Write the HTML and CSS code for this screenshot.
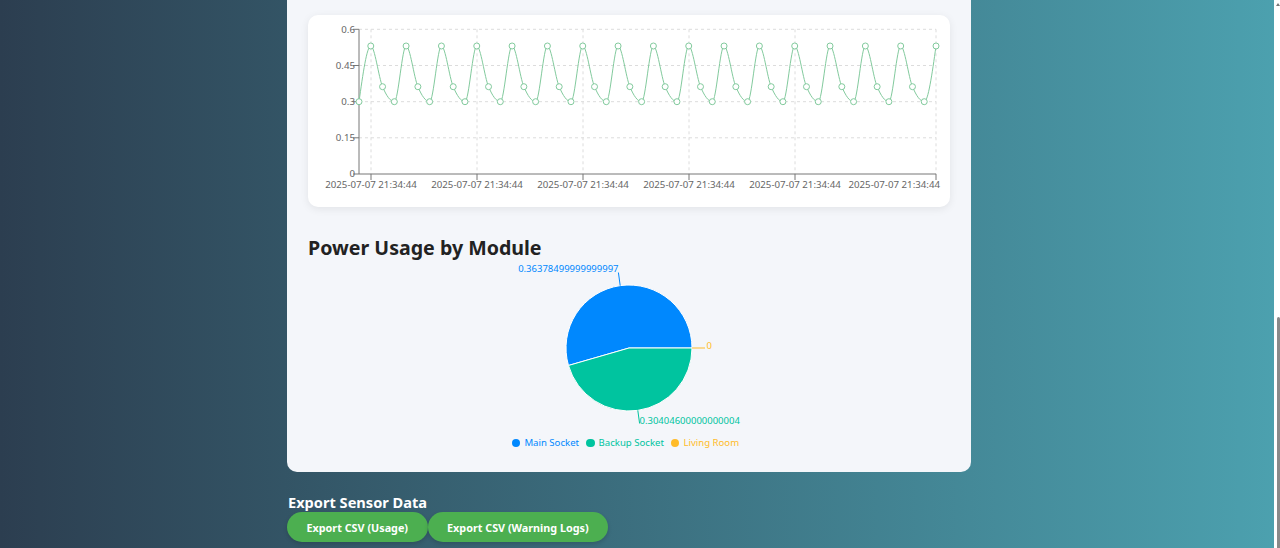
FILE: index.html
```html
<!DOCTYPE html>
<html lang="en">
<head>
<meta charset="utf-8">
<title>Power Usage</title>
<link rel="stylesheet" href="styles.css">
</head>
<body>
<div class="scrollbar"><span class="scroll-arrow"></span><div class="scroll-thumb"></div></div>
<main class="page">
  <section class="panel">
    <div class="card">
      <svg class="line-chart" width="642" height="192" viewBox="308 15 642 192">
        <defs>
          <marker id="dot" markerWidth="8" markerHeight="8" refX="4" refY="4" markerUnits="userSpaceOnUse">
            <circle cx="4" cy="4" r="3" fill="#fff" stroke="#82ca9d" stroke-width="1"/>
          </marker>
        </defs>
        <g class="grid">
          <line x1="359" y1="29.3" x2="936" y2="29.3"/>
          <line x1="359" y1="65.5" x2="936" y2="65.5"/>
          <line x1="359" y1="101.7" x2="936" y2="101.7"/>
          <line x1="359" y1="137.8" x2="936" y2="137.8"/>
          <line x1="371" y1="29.3" x2="371" y2="174"/>
          <line x1="477" y1="29.3" x2="477" y2="174"/>
          <line x1="583" y1="29.3" x2="583" y2="174"/>
          <line x1="689" y1="29.3" x2="689" y2="174"/>
          <line x1="795" y1="29.3" x2="795" y2="174"/>
          <line x1="936" y1="29.3" x2="936" y2="174"/>
        </g>
        <g class="axis">
          <line x1="359" y1="29.3" x2="359" y2="174"/>
          <line x1="359" y1="174" x2="936" y2="174"/>
          <line x1="353" y1="29.3" x2="359" y2="29.3"/>
          <line x1="353" y1="65.5" x2="359" y2="65.5"/>
          <line x1="353" y1="101.7" x2="359" y2="101.7"/>
          <line x1="353" y1="137.8" x2="359" y2="137.8"/>
          <line x1="353" y1="174" x2="359" y2="174"/>
          <line x1="371" y1="174" x2="371" y2="180"/>
          <line x1="477" y1="174" x2="477" y2="180"/>
          <line x1="583" y1="174" x2="583" y2="180"/>
          <line x1="689" y1="174" x2="689" y2="180"/>
          <line x1="795" y1="174" x2="795" y2="180"/>
          <line x1="936" y1="174" x2="936" y2="180"/>
        </g>
        <g class="tick-text y-ticks">
          <text x="355" y="32.6">0.6</text>
          <text x="355" y="68.8">0.45</text>
          <text x="355" y="105">0.3</text>
          <text x="355" y="141.1">0.15</text>
          <text x="355" y="176.8">0</text>
        </g>
        <g class="tick-text x-ticks">
          <text x="371" y="187.5">2025-07-07 21:34:44</text>
          <text x="477" y="187.5">2025-07-07 21:34:44</text>
          <text x="583" y="187.5">2025-07-07 21:34:44</text>
          <text x="689" y="187.5">2025-07-07 21:34:44</text>
          <text x="795" y="187.5">2025-07-07 21:34:44</text>
          <text x="940" y="187.5" class="end">2025-07-07 21:34:44</text>
        </g>
        <path class="series" d="M359,101.7 c3.925,-27.85 7.851,-55.7 11.776,-55.7
          c3.925,0 7.851,31.42 11.776,40.7 c3.925,9.28 7.851,15 11.776,15 c3.925,0 7.851,-55.7 11.776,-55.7
          c3.925,0 7.851,31.42 11.776,40.7 c3.925,9.28 7.851,15 11.776,15 c3.925,0 7.851,-55.7 11.776,-55.7
          c3.925,0 7.851,31.42 11.776,40.7 c3.925,9.28 7.851,15 11.776,15 c3.925,0 7.851,-55.7 11.776,-55.7
          c3.925,0 7.851,31.42 11.776,40.7 c3.925,9.28 7.851,15 11.776,15 c3.925,0 7.851,-55.7 11.776,-55.7
          c3.925,0 7.851,31.42 11.776,40.7 c3.925,9.28 7.851,15 11.776,15 c3.925,0 7.851,-55.7 11.776,-55.7
          c3.925,0 7.851,31.42 11.776,40.7 c3.925,9.28 7.851,15 11.776,15 c3.925,0 7.851,-55.7 11.776,-55.7
          c3.925,0 7.851,31.42 11.776,40.7 c3.925,9.28 7.851,15 11.776,15 c3.925,0 7.851,-55.7 11.776,-55.7
          c3.925,0 7.851,31.42 11.776,40.7 c3.925,9.28 7.851,15 11.776,15 c3.925,0 7.851,-55.7 11.776,-55.7
          c3.925,0 7.851,31.42 11.776,40.7 c3.925,9.28 7.851,15 11.776,15 c3.925,0 7.851,-55.7 11.776,-55.7
          c3.925,0 7.851,31.42 11.776,40.7 c3.925,9.28 7.851,15 11.776,15 c3.925,0 7.851,-55.7 11.776,-55.7
          c3.925,0 7.851,31.42 11.776,40.7 c3.925,9.28 7.851,15 11.776,15 c3.925,0 7.851,-55.7 11.776,-55.7
          c3.925,0 7.851,31.42 11.776,40.7 c3.925,9.28 7.851,15 11.776,15 c3.925,0 7.851,-55.7 11.776,-55.7
          c3.925,0 7.851,31.42 11.776,40.7 c3.925,9.28 7.851,15 11.776,15 c3.925,0 7.851,-55.7 11.776,-55.7
          c3.925,0 7.851,31.42 11.776,40.7 c3.925,9.28 7.851,15 11.776,15 c3.925,0 7.851,-55.7 11.776,-55.7
          c3.925,0 7.851,31.42 11.776,40.7 c3.925,9.28 7.851,15 11.776,15 c3.925,0 7.851,-55.7 11.776,-55.7
          c3.925,0 7.851,31.42 11.776,40.7 c3.925,9.28 7.851,15 11.776,15 c3.925,0 7.851,-27.85 11.776,-55.7"/>
      </svg>
    </div>

    <h2 class="section-title">Power Usage by Module</h2>

    <svg class="pie-chart" width="642" height="170" viewBox="308 262 642 170">
      <path class="slice" fill="#0088FE" d="M629,348 L692,348 A63,63 0 1 0 568.47,365.47 Z"/>
      <path class="slice" fill="#00C49F" d="M629,348 L568.47,365.47 A63,63 0 0 0 692,348 Z"/>
      <line class="label-line" stroke="#0088FE" x1="620.2" y1="285.6" x2="618.4" y2="272.5"/>
      <line class="label-line" stroke="#00C49F" x1="637.8" y1="410.4" x2="639.6" y2="423.5"/>
      <line class="label-line" stroke="#FFBB28" x1="692" y1="348" x2="705" y2="348"/>
      <text class="pie-label" fill="#0088FE" x="618.5" y="271.8" text-anchor="end">0.36378499999999997</text>
      <text class="pie-label" fill="#00C49F" x="639.5" y="424.4">0.30404600000000004</text>
      <text class="pie-label" fill="#FFBB28" x="706.5" y="348.5">0</text>
    </svg>

    <ul class="legend">
      <li class="legend-item main"><span class="legend-dot"></span>Main Socket</li>
      <li class="legend-item backup"><span class="legend-dot"></span>Backup Socket</li>
      <li class="legend-item living"><span class="legend-dot"></span>Living Room</li>
    </ul>
  </section>

  <section class="export">
    <h3 class="export-title">Export Sensor Data</h3>
    <div class="actions">
      <button class="btn">Export CSV (Usage)</button>
      <button class="btn">Export CSV (Warning Logs)</button>
    </div>
  </section>
</main>
</body>
</html>
```

FILE: styles.css
```css
html {
  background: linear-gradient(to right, #2c3e50, #4ca1af);
  min-height: 100%;
}

body {
  margin: 0;
  padding-right: 6px;
  font-family: "Noto Sans", "Open Sans", sans-serif;
  color: #222;
  overflow: hidden;
  height: 548px;
}

.page {
  width: 700px;
  margin: 0 auto;
}

.panel {
  box-sizing: border-box;
  width: 684px;
  margin-top: -20px;
  padding: 35px 21px 19px;
  background: #f4f6fa;
  border-radius: 10px;
}

.card {
  background: #fff;
  border-radius: 10px;
  box-shadow: 0 2px 8px rgba(0, 0, 0, 0.08);
}

.line-chart,
.pie-chart {
  display: block;
}

.grid line {
  stroke: #dcdcdc;
  stroke-dasharray: 3 3;
  stroke-width: 1;
}

.axis line {
  stroke: #777;
  stroke-width: 1;
}

.tick-text text {
  font-family: "Noto Sans", sans-serif;
  font-size: 9.7px;
  fill: #666;
}

.y-ticks text {
  text-anchor: end;
}

.x-ticks text {
  text-anchor: middle;
}

.x-ticks text.end {
  text-anchor: end;
}

.series {
  fill: none;
  stroke: #82ca9d;
  stroke-width: 1;
  marker-start: url(#dot);
  marker-mid: url(#dot);
  marker-end: url(#dot);
}

.section-title {
  margin: 27px 0 0;
  font-size: 19.6px;
  line-height: 28px;
  font-weight: 700;
  color: #222;
}

.slice {
  stroke: #fff;
  stroke-width: 1;
}

.label-line {
  stroke-width: 1;
}

.pie-label {
  font-family: "Noto Sans", sans-serif;
  font-size: 9.5px;
}

.legend {
  display: flex;
  justify-content: center;
  margin: 0;
  padding: 1px 0 0;
  list-style: none;
  height: 20px;
  font-size: 9.6px;
  line-height: 20px;
}

.legend-item {
  display: flex;
  align-items: center;
  margin-right: 7px;
}

.legend-dot {
  width: 8.5px;
  height: 8.5px;
  border-radius: 50%;
  margin-right: 4px;
  background: currentColor;
}

.legend-item.main { color: #0088FE; }
.legend-item.backup { color: #00C49F; }
.legend-item.living { color: #FFBB28; }

.export {
  padding-top: 20px;
}

.export-title {
  margin: 0;
  padding-left: 1px;
  font-size: 14.6px;
  line-height: 20px;
  font-weight: 700;
  color: #fff;
}

.actions {
  display: flex;
  gap: 0;
}

.btn {
  height: 30px;
  padding: 0 19.5px;
  border: none;
  border-radius: 15px;
  background: #4caf50;
  color: #fff;
  font-family: "Noto Sans", sans-serif;
  font-size: 10.8px;
  font-weight: 700;
  box-shadow: 0 2px 4px rgba(0, 0, 0, 0.15);
}

.scrollbar {
  position: fixed;
  top: 0;
  right: 0;
  width: 6px;
  height: 100%;
  background: #fff;
}

.scroll-arrow {
  position: absolute;
  top: 3px;
  right: 0;
  width: 0;
  height: 0;
  border-left: 2px solid transparent;
  border-right: 2px solid transparent;
  border-bottom: 3px solid #777;
}

.scroll-thumb {
  position: absolute;
  top: 317px;
  right: 0;
  width: 3px;
  height: 240px;
  border-radius: 2px 2px 0 0;
  background: #8a8a8a;
}
```
